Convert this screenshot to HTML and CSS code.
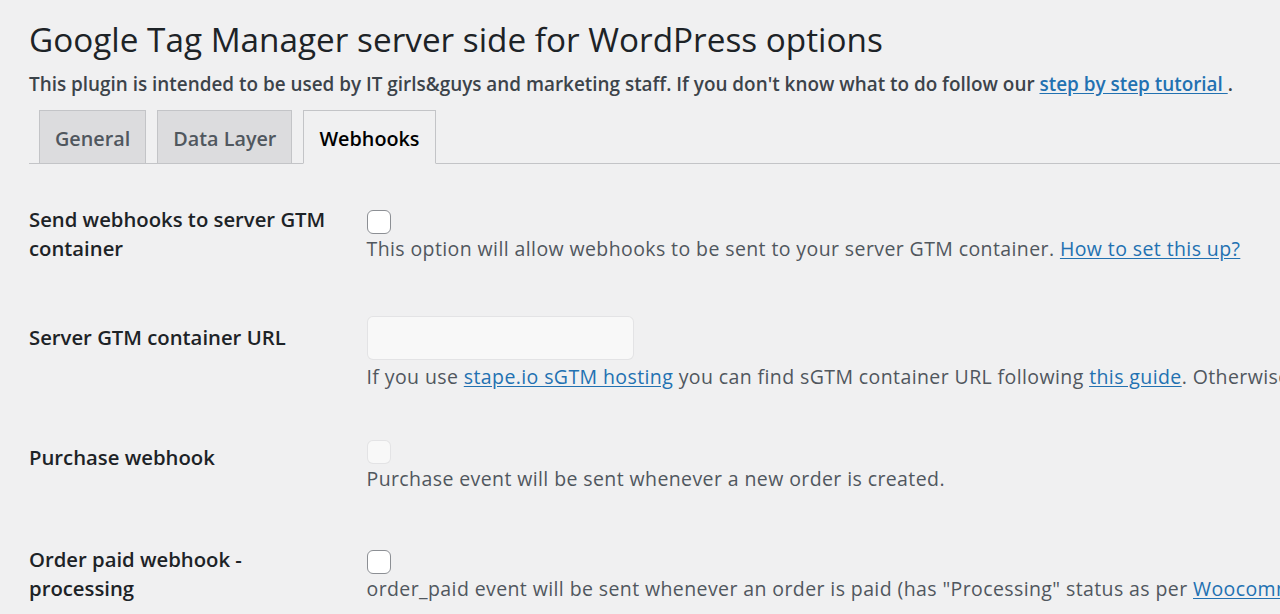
FILE: index.html
```html
<!DOCTYPE html>
<html lang="en">
<head>
<meta charset="utf-8">
<title>Google Tag Manager server side for WordPress options</title>
<link rel="stylesheet" href="styles.css">
</head>
<body>
<div class="wrap">
  <h1 class="title">Google Tag Manager server side for WordPress options</h1>
  <p class="intro">This plugin is intended to be used by IT girls&amp;guys and marketing staff. If you don't know what to do follow our <a href="#">step by step tutorial </a>.</p>
  <nav class="tabs">
    <a class="tab" href="#">General</a>
    <a class="tab" href="#">Data Layer</a>
    <a class="tab tab-active" href="#">Webhooks</a>
  </nav>
  <table class="form-table">
    <colgroup>
      <col class="col-label">
      <col>
    </colgroup>
    <tbody>
      <tr>
        <th scope="row">Send webhooks to server GTM container</th>
        <td>
          <input class="cb" type="checkbox">
          <p class="desc">This option will allow webhooks to be sent to your server GTM container. <a href="#">How to set this up?</a></p>
        </td>
      </tr>
      <tr>
        <th scope="row">Server GTM container URL</th>
        <td>
          <input class="text-input" type="text" disabled>
          <p class="desc">If you use <a href="#">stape.io sGTM hosting</a> you can find sGTM container URL following <a href="#">this guide</a>. Otherwise you can find sGTM container URL in your container settings.</p>
        </td>
      </tr>
      <tr>
        <th scope="row">Purchase webhook</th>
        <td>
          <input class="cb" type="checkbox" disabled>
          <p class="desc">Purchase event will be sent whenever a new order is created.</p>
        </td>
      </tr>
      <tr>
        <th scope="row">Order paid webhook - processing</th>
        <td>
          <input class="cb" type="checkbox">
          <p class="desc">order_paid event will be sent whenever an order is paid (has "Processing" status as per <a href="#">Woocommerce</a> order statuses).</p>
        </td>
      </tr>
    </tbody>
  </table>
</div>
</body>
</html>
```
FILE: styles.css
```css
html, body {
  margin: 0;
  padding: 0;
  background: #f0f0f1;
  overflow: hidden;
}
body {
  font-family: "Open Sans", "Noto Sans", sans-serif;
  color: #3c434a;
  width: 1280px;
  height: 614px;
}
.wrap {
  padding: 18px 0 0 29px;
}
a {
  color: #2271b1;
  text-decoration: underline;
  text-underline-offset: 2px;
}
.title {
  margin: 0;
  font-size: 33.3px;
  font-weight: 400;
  line-height: 43px;
  color: #1d2327;
}
.intro {
  margin: 9px 0 0;
  font-size: 18.9px;
  font-weight: 600;
  line-height: 28px;
  color: #3c434a;
  white-space: nowrap;
}
.tabs {
  display: flex;
  align-items: flex-end;
  gap: 11px;
  margin-top: 12px;
  padding-left: 10px;
  border-bottom: 1px solid #c3c4c7;
}
.tab {
  display: block;
  margin-bottom: -1px;
  padding: 10px 15px 6px;
  font-size: 19.8px;
  font-weight: 600;
  line-height: 36px;
  color: #50575e;
  text-decoration: none;
  background: #dcdcde;
  border: 1px solid #c3c4c7;
}
.tab-active {
  background: #f0f0f1;
  color: #000;
  border-bottom-color: #f0f0f1;
}
.form-table {
  width: 1700px;
  margin-top: 11px;
  table-layout: fixed;
  border-collapse: collapse;
  border-spacing: 0;
}
.col-label {
  width: 315px;
}
.form-table th {
  padding: 30px 15px 30px 0;
  vertical-align: top;
  text-align: left;
  font-size: 20.3px;
  font-weight: 600;
  line-height: 29px;
  color: #1d2327;
}
.form-table td {
  padding: 22.5px 10px 22.5px 22.5px;
  vertical-align: middle;
}
.cb {
  display: block;
  appearance: none;
  -webkit-appearance: none;
  box-sizing: border-box;
  width: 24px;
  height: 24px;
  margin: 4px 0 0;
  border: 1px solid #8c8f94;
  border-radius: 6px;
  background: #fff;
}
.cb:disabled {
  background: rgba(255, 255, 255, 0.5);
  border-color: rgba(220, 220, 222, 0.75);
}
.text-input {
  display: block;
  box-sizing: border-box;
  width: 267px;
  height: 44px;
  margin: 0 0 2px;
  border: 1px solid rgba(220, 220, 222, 0.75);
  border-radius: 6px;
  background: rgba(255, 255, 255, 0.5);
}
.desc {
  margin: 0;
  font-size: 19.5px;
  letter-spacing: 0.4px;
  line-height: 29px;
  color: #50575e;
  white-space: nowrap;
}
```
